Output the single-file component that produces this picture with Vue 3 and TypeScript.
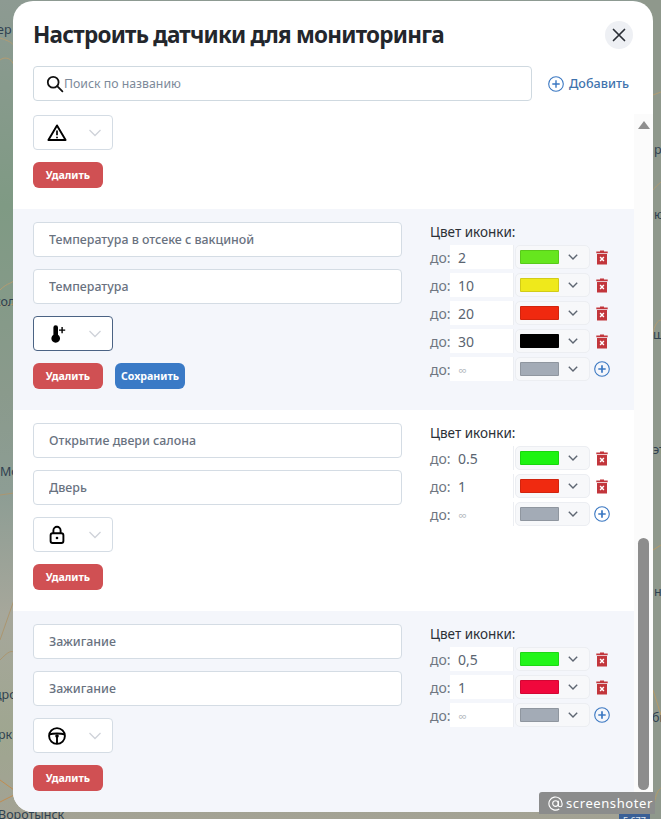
<script setup lang="ts">
interface Level {
  to: string;
  color: string;
}

interface Sensor {
  id: number;
  name?: string;
  type?: string;
  icon: "warning" | "thermo" | "lock" | "wheel";
  tinted: boolean;
  focused?: boolean;
  canSave?: boolean;
  levels?: Level[];
}

const sensors: Sensor[] = [
  { id: 1, icon: "warning", tinted: false },
  {
    id: 2,
    name: "Температура в отсеке с вакциной",
    type: "Температура",
    icon: "thermo",
    tinted: true,
    focused: true,
    canSave: true,
    levels: [
      { to: "2", color: "#66e61e" },
      { to: "10", color: "#efe91b" },
      { to: "20", color: "#f0290f" },
      { to: "30", color: "#000000" },
    ],
  },
  {
    id: 3,
    name: "Открытие двери салона",
    type: "Дверь",
    icon: "lock",
    tinted: false,
    levels: [
      { to: "0.5", color: "#1df311" },
      { to: "1", color: "#f02a10" },
    ],
  },
  {
    id: 4,
    name: "Зажигание",
    type: "Зажигание",
    icon: "wheel",
    tinted: true,
    levels: [
      { to: "0,5", color: "#22f51a" },
      { to: "1", color: "#f0083c" },
    ],
  },
];

const mapLabels = [
  { text: "ер", x: -3, y: 21 },
  { text: "кол", x: -6, y: 293 },
  { text: "Мо", x: 0, y: 463 },
  { text: "дро", x: -6, y: 686 },
  { text: "рк", x: -2, y: 726 },
  { text: "Воротынск", x: -2, y: 806 },
  { text: "р", x: 654, y: 141 },
  { text: "ю", x: 654, y: 206 },
  { text: "ш", x: 653, y: 326 },
  { text: "эт", x: 653, y: 441 },
  { text: "н", x: 654, y: 583 },
  { text: "бн", x: 652, y: 709 },
];
</script>

<template>
  <div class="page">
    <div class="map">
      <svg class="roads" width="661" height="819" viewBox="0 0 661 819" fill="none">
        <path d="M0 38 C12 42 18 44 14 60 M0 60 C5 56 12 58 14 66" stroke="#b39c72" stroke-width="1" />
        <path d="M0 290 C8 282 12 284 14 280 M0 306 L14 304" stroke="#b39c72" stroke-width="1" />
        <path d="M0 495 L14 493 M0 660 C6 654 10 650 14 652 M0 640 L14 600" stroke="#ab9670" stroke-width="1" />
        <path d="M0 802 L14 795 L40 812 M0 780 L14 790" stroke="#c08c50" stroke-width="1" />
        <path d="M653 95 L661 92 M653 190 C657 185 659 184 661 182 M653 335 C654 325 658 320 661 320" stroke="#b39c72" stroke-width="1" />
        <path d="M653 550 L661 545 M653 690 L661 715 M653 812 C655 795 658 790 661 788" stroke="#b59a68" stroke-width="1" />
      </svg>
      <span
        v-for="label in mapLabels"
        :key="label.text"
        class="map-label"
        :style="{ left: label.x + 'px', top: label.y + 'px' }"
      >{{ label.text }}</span>
      <span class="road-badge">Е 677</span>
    </div>

    <div class="modal">
      <header class="modal-head">
        <h1>Настроить датчики для мониторинга</h1>
        <button class="close" type="button" aria-label="Закрыть">
          <svg width="14" height="14" viewBox="0 0 14 14" fill="none" stroke="#2b2f36" stroke-width="1.7" stroke-linecap="round">
            <path d="M1.5 1.5 L12.5 12.5 M12.5 1.5 L1.5 12.5" />
          </svg>
        </button>
      </header>

      <div class="search-row">
        <label class="search">
          <svg width="18" height="18" viewBox="0 0 18 18" fill="none" stroke="#111" stroke-width="1.8" stroke-linecap="round">
            <circle cx="7.2" cy="7.2" r="5.4" />
            <path d="M11.2 11.2 L16.4 16.4" />
          </svg>
          <input type="text" placeholder="Поиск по названию" />
        </label>
        <button class="add" type="button">
          <svg width="16" height="16" viewBox="0 0 16 16" fill="none" stroke="#3b78c2" stroke-width="1.1">
            <circle cx="8" cy="8" r="7.3" />
            <path stroke-width="1.4" d="M8 4.3 V11.7 M4.3 8 H11.7" />
          </svg>
          Добавить
        </button>
      </div>

      <div class="body">
        <div class="list">
          <section
            v-for="sensor in sensors"
            :key="sensor.id"
            class="sensor"
            :class="{ tinted: sensor.tinted, first: !sensor.name }"
          >
            <div class="left">
              <input v-if="sensor.name" class="field" type="text" :value="sensor.name" />
              <input v-if="sensor.type" class="field" type="text" :value="sensor.type" />
              <div class="icon-select" :class="{ focused: sensor.focused }">
                <svg v-if="sensor.icon === 'warning'" width="20" height="20" viewBox="0 0 20 20" fill="none" stroke="#000" stroke-width="1.9" stroke-linejoin="round">
                  <path d="M10 2.4 L18.6 17 H1.4 Z" />
                  <path d="M10 7.5 V12.2 M10 13.8 V15.2" stroke-width="1.7" />
                </svg>
                <svg v-else-if="sensor.icon === 'thermo'" width="20" height="20" viewBox="0 0 20 20" fill="#000">
                  <path d="M6.4 3.6 a2.3 2.3 0 0 1 4.6 0 V10.8 a4.3 4.3 0 1 1 -4.6 0 Z" />
                  <path d="M14.4 3 h1.4 v2.4 h2.4 v1.4 h-2.4 v2.4 h-1.4 v-2.4 h-2.4 v-1.4 h2.4 Z" />
                </svg>
                <svg v-else-if="sensor.icon === 'lock'" width="20" height="20" viewBox="0 0 20 20" fill="none" stroke="#000" stroke-width="1.9">
                  <rect x="3.6" y="8.2" width="12.8" height="9.8" rx="2" />
                  <path d="M6.4 8.2 V5.4 a3.6 3.6 0 0 1 7.2 0 V8.2" />
                  <circle cx="10" cy="13" r="1.3" fill="#000" stroke="none" />
                </svg>
                <svg v-else width="20" height="20" viewBox="0 0 20 20" fill="none" stroke="#000" stroke-width="1.9">
                  <circle cx="10" cy="10" r="7.9" />
                  <path d="M2.6 8.4 C6 7.2 14 7.2 17.4 8.4 M10 11 V17.6" />
                  <circle cx="10" cy="10" r="1.8" fill="#000" stroke="none" />
                </svg>
                <svg class="icon-chev" width="14" height="8" viewBox="0 0 14 8" fill="none" stroke="#cfd3d9" stroke-width="1.3">
                  <path d="M1.5 1 L7 6.5 L12.5 1" />
                </svg>
              </div>
              <div class="actions">
                <button class="btn red" type="button">Удалить</button>
                <button v-if="sensor.canSave" class="btn blue" type="button">Сохранить</button>
              </div>
            </div>

            <div v-if="sensor.levels" class="right">
              <div class="right-title">Цвет иконки:</div>
              <div v-for="level in sensor.levels" :key="level.to" class="level">
                <span class="level-label">до:</span>
                <input class="level-input" type="text" :value="level.to" />
                <div class="color-select">
                  <span class="swatch" :style="{ background: level.color }"></span>
                  <svg width="10" height="6" viewBox="0 0 10 6" fill="none" stroke="#5e6672" stroke-width="1.4">
                    <path d="M0.8 0.8 L5 5 L9.2 0.8" />
                  </svg>
                </div>
                <svg class="trash" width="12" height="15" viewBox="0 0 12 15">
                  <path fill="#c2363c" d="M4 0.4 H8 V1.6 H11.7 V3.2 H0.3 V1.6 H4 Z M1 4 H11 V14.6 H1 Z" />
                  <path stroke="#fff" stroke-width="1.4" d="M4.1 7 L7.9 11 M7.9 7 L4.1 11" />
                </svg>
              </div>
              <div class="level">
                <span class="level-label">до:</span>
                <input class="level-input" type="text" placeholder="∞" />
                <div class="color-select">
                  <span class="swatch" style="background: #a3abb6"></span>
                  <svg width="10" height="6" viewBox="0 0 10 6" fill="none" stroke="#5e6672" stroke-width="1.4">
                    <path d="M0.8 0.8 L5 5 L9.2 0.8" />
                  </svg>
                </div>
                <svg class="plus" width="16" height="16" viewBox="0 0 16 16" fill="none" stroke="#3b78c2" stroke-width="1.1">
                  <circle cx="8" cy="8" r="7.3" />
                  <path stroke-width="1.7" d="M8 4.3 V11.7 M4.3 8 H11.7" />
                </svg>
              </div>
            </div>
          </section>
        </div>

        <div class="scrollbar">
          <span class="arrow"></span>
          <span class="thumb"></span>
        </div>
      </div>
    </div>

    <div class="watermark">
      <svg width="15" height="15" viewBox="0 0 16 16" fill="none" stroke="#fff" stroke-width="1.2">
        <circle cx="8" cy="8" r="3" />
        <path d="M11 5 V9.5 a2 2 0 0 0 4 0 V8 a7 7 0 1 0 -3 5.8" />
      </svg>
      <span>screenshoter</span>
    </div>
  </div>
</template>

<style scoped>
.page {
  position: relative;
  width: 661px;
  height: 819px;
  overflow: hidden;
  box-sizing: border-box;
  padding: 1px 8px 7px 13px;
  font-family: "Noto Sans", "Open Sans", sans-serif;
}

.map {
  position: absolute;
  inset: 0;
  background:
    linear-gradient(90deg, transparent 0 640px, #8f988c 640px 661px),
    linear-gradient(180deg, #8d9a92 0, #7f9a84 25%, #8a9a8c 48%, #8d9d94 60%, #a6a79b 75%, #9fa690 90%, #a3a294 100%);
}

.roads {
  position: absolute;
  left: 0;
  top: 0;
}

.map-label {
  position: absolute;
  font-size: 12.5px;
  line-height: 18px;
  color: #2f4150;
}

.road-badge {
  position: absolute;
  left: 619px;
  top: 814px;
  width: 31px;
  height: 14px;
  background: #3a5f96;
  color: #dfe6f0;
  font-size: 9px;
  text-align: center;
}

.modal {
  position: relative;
  height: 811px;
  display: flex;
  flex-direction: column;
  background: #fff;
  border-radius: 20px;
  overflow: hidden;
}

.modal-head {
  display: flex;
  align-items: center;
  justify-content: space-between;
  padding: 20px 20px 0;
  height: 28px;
  flex: none;
  box-sizing: content-box;
}

h1 {
  margin: -2px 0 0;
  font-size: 22.5px;
  font-weight: 700;
  letter-spacing: -0.75px;
  color: #23262c;
}

.close {
  width: 28px;
  height: 28px;
  padding: 0;
  border: none;
  border-radius: 50%;
  background: #eef0f4;
  display: flex;
  align-items: center;
  justify-content: center;
}

.search-row {
  flex: none;
  display: flex;
  align-items: center;
  padding: 0 24px 0 20px;
  height: 35px;
  margin-top: 17px;
}

.search {
  width: 499px;
  height: 35px;
  box-sizing: border-box;
  border: 1px solid #cfd9e0;
  border-radius: 4px;
  display: flex;
  align-items: center;
  gap: 0;
  padding-left: 12px;
}

.search input {
  flex: 1;
  border: none;
  outline: none;
  padding: 0;
  font-family: inherit;
  font-size: 12.3px;
  background: none;
}

.search input::placeholder {
  color: #7d8a9a;
}

.add {
  margin-left: 16px;
  padding: 0;
  display: flex;
  align-items: center;
  gap: 5px;
  border: none;
  background: none;
  font-family: inherit;
  font-size: 12.6px;
  font-weight: 500;
  color: #3f73ad;
  white-space: nowrap;
}

.body {
  flex: 1;
  min-height: 0;
  display: flex;
  margin-top: 13px;
}

.list {
  width: 621px;
  flex: none;
}

.sensor {
  box-sizing: border-box;
  height: 201px;
  padding: 13px 0 0 20px;
  display: flex;
}

.sensor.first {
  height: 95px;
  padding-top: 1px;
}

.sensor.tinted {
  background: #f4f6fb;
}

.left {
  width: 369px;
  flex: none;
  display: flex;
  flex-direction: column;
  align-items: flex-start;
  gap: 12px;
}

.field {
  width: 100%;
  height: 35px;
  box-sizing: border-box;
  padding: 0 15px;
  border: 1px solid #d4dce4;
  border-radius: 4px;
  background: #fff;
  outline: none;
  font-family: inherit;
  font-size: 12.4px;
  font-weight: 500;
  color: #69727f;
}

.icon-select {
  width: 80px;
  height: 35px;
  box-sizing: border-box;
  display: flex;
  align-items: center;
  justify-content: space-between;
  padding: 0 10px 0 13px;
  background: #fff;
  border: 1px solid #d4dce4;
  border-radius: 4px;
}

.icon-select.focused {
  border-color: #4b6384;
}

.actions {
  display: flex;
  gap: 12px;
}

.btn {
  width: 70px;
  height: 26px;
  padding: 0;
  border: none;
  border-radius: 6px;
  font-family: inherit;
  font-size: 10.6px;
  font-weight: 700;
  color: #fff;
}

.btn.red {
  background: #d05053;
}

.btn.blue {
  background: #3a7ac6;
}

.right {
  margin-left: 28px;
  width: 185px;
}

.right-title {
  font-size: 13.5px;
  line-height: 21px;
  color: #2c3036;
}

.level {
  height: 28px;
  display: flex;
  align-items: center;
}

.level-label {
  width: 20px;
  font-size: 14px;
  color: #6f7681;
}

.level-input {
  width: 64px;
  height: 24px;
  box-sizing: border-box;
  padding: 0 8px;
  border: none;
  border-right: 1px solid #eceef2;
  background: #fff;
  outline: none;
  font-family: inherit;
  font-size: 14px;
  color: #5a6471;
}

.level-input::placeholder {
  color: #b4b9c0;
  font-size: 12px;
}

.color-select {
  margin-left: 1px;
  width: 75px;
  height: 24px;
  box-sizing: border-box;
  display: flex;
  align-items: center;
  gap: 9px;
  padding-left: 4px;
  border: 1px solid #eceef2;
  border-radius: 5px;
  background: #f7f8fa;
}

.swatch {
  width: 39px;
  height: 14px;
  border-radius: 1px;
  box-shadow: inset 0 0 0 1px rgba(0, 0, 0, 0.12);
}

.trash {
  margin-left: 6px;
}

.plus {
  margin-left: 4px;
}

.scrollbar {
  flex: 1;
  display: flex;
  flex-direction: column;
  align-items: center;
  background: #fbfbfb;
}

.arrow {
  margin-top: 7px;
  width: 0;
  height: 0;
  border-left: 6px solid transparent;
  border-right: 6px solid transparent;
  border-bottom: 8px solid #8f8f8f;
}

.thumb {
  margin-top: 409px;
  width: 11px;
  height: 252px;
  border-radius: 6px;
  background: #8d8d8d;
}

.watermark {
  position: absolute;
  left: 539px;
  top: 792px;
  width: 116px;
  height: 22px;
  box-sizing: border-box;
  padding-left: 9px;
  display: flex;
  align-items: center;
  gap: 3px;
  background: #8b8c8c;
  border-radius: 3px 0 0 0;
  color: #fff;
  font-size: 13px;
  letter-spacing: 0.6px;
}
</style>

<style>
body {
  margin: 0;
  background: #8f988c;
}
</style>
